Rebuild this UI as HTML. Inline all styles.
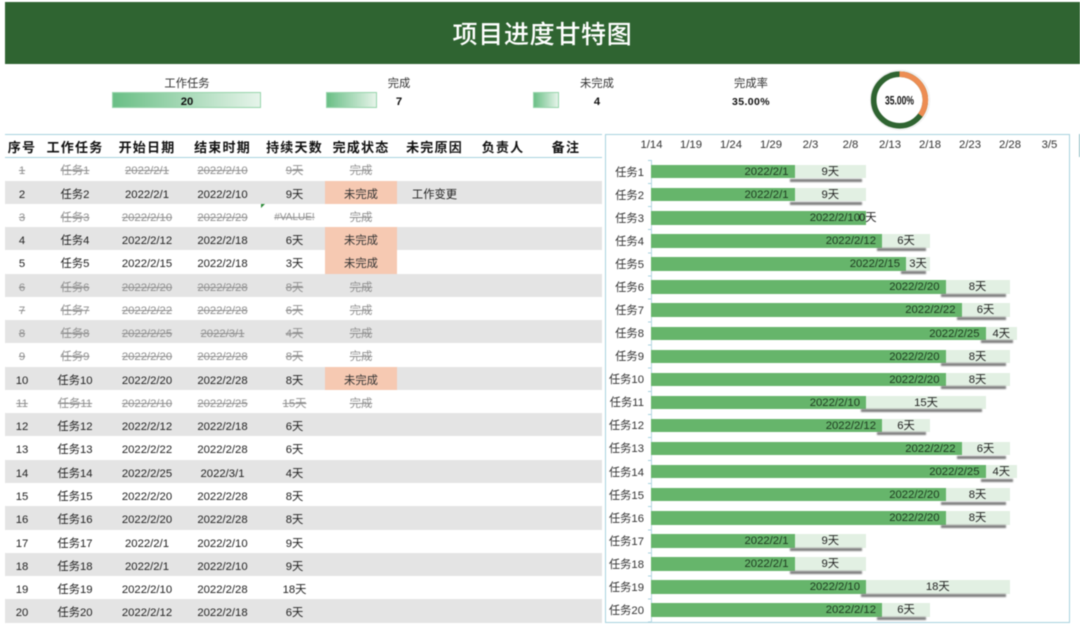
<!DOCTYPE html>
<html lang="zh">
<head>
<meta charset="utf-8">
<title>项目进度甘特图</title>
<style>
*{margin:0;padding:0;box-sizing:border-box}
html,body{width:1080px;height:626px;overflow:hidden;background:#fff}
body{position:relative;font-family:"Liberation Sans","Noto Sans CJK SC",sans-serif;font-size:11.3px;color:#222;filter:blur(.4px)}
.title{position:absolute;left:5px;top:2px;width:1075px;height:62px;background:#2f6431;color:#fff;font-size:25px;line-height:66px;text-align:center;letter-spacing:.7px;font-weight:500}
.lb,.vl{position:absolute;text-align:center;white-space:nowrap;transform:translateX(-50%)}
.lb{top:76px;line-height:16px;font-size:11.3px;color:#333}
.vl{top:94px;line-height:16px;font-weight:bold;color:#111}
.kb{position:absolute;top:92px;height:16px;background:linear-gradient(90deg,#6abf86,#e6f4ea);border:1px solid #97d4ab}
.head{position:absolute;left:5px;top:134px;width:597px;height:24px;border-top:1.5px solid #a8d2de;border-bottom:1.5px solid #a8d2de;font-weight:bold;font-size:13px;letter-spacing:1.2px;color:#111}
.head i,.r i{position:absolute;font-style:normal;text-align:center;white-space:nowrap;transform:translateX(-50%)}
.head i{top:3px;line-height:19px}
.rows{position:absolute;left:5px;top:157.3px;width:597px;height:465.4px;border-bottom:1.5px solid #a8d2de}
.r{position:relative;height:23.27px}
.r i{top:0;height:23.27px;line-height:28.5px}
.g{background:#e4e4e4}
.r i:nth-child(1){left:17px}.r i:nth-child(2){left:70px}.r i:nth-child(3){left:142px}.r i:nth-child(4){left:217.5px}.r i:nth-child(5){left:289.5px}.r i:nth-child(6){left:356px}.r i:nth-child(7){left:429.5px}
.d{color:#8f8f8f}
.d i{text-decoration:line-through}
.r i.p{width:72px;background:#f6c9b2;color:#333}
.tri{position:absolute;left:261px;top:204px;width:0;height:0;border-top:4px solid #2a8a35;border-right:4px solid transparent}
.box{position:absolute;left:605px;top:134.3px;width:465px;height:489px;border:1.5px solid #a8d2de}
.ax{position:absolute;top:138px;line-height:15px;transform:translateX(-50%);color:#333;font-size:11.3px}
.axis{position:absolute;left:651px;top:160px;width:1px;height:463px;background:#b5d8e2}
.ticks{position:absolute;left:648px;top:160px;width:3px;height:463px;background:repeating-linear-gradient(180deg,#a8d2de 0,#a8d2de 1px,transparent 1px,transparent 23.08px)}
.chart{position:absolute;left:606px;top:160.5px;width:463px}
.c{position:relative;height:23.08px}
.c u{position:absolute;right:425px;top:5px;line-height:14px;text-decoration:none;color:#333;white-space:nowrap}
.c s{position:absolute;left:45px;top:4.5px;height:13.4px;line-height:15px;background:#66b56b;text-decoration:none;text-align:right;padding-right:6px;color:#1d3a20;white-space:nowrap}
.c em{position:absolute;top:4.5px;height:13.4px;line-height:15px;background:#e2f0e3;font-style:normal;text-align:center;color:#222;white-space:nowrap}
.c em:after{content:"";position:absolute;left:-5px;right:4px;top:13.6px;height:3px;background:#7d7d7d;filter:blur(.7px)}
.c em.z{background:none;width:0}
.c em.z:after{display:none}
.edge{position:absolute;left:1079px;top:134px;width:1px;height:23px;background:#8fbcc4}
</style>
</head>
<body>
<div class="title">项目进度甘特图</div>

<div class="lb" style="left:187px">工作任务</div>
<div class="kb" style="left:112px;width:149px"></div>
<div class="vl" style="left:187px">20</div>
<div class="lb" style="left:399px">完成</div>
<div class="kb" style="left:326px;width:51px"></div>
<div class="vl" style="left:399px">7</div>
<div class="lb" style="left:597px">未完成</div>
<div class="kb" style="left:533px;width:26px"></div>
<div class="vl" style="left:597px">4</div>
<div class="lb" style="left:751px">完成率</div>
<div class="vl" style="left:751px;font-size:10.5px;letter-spacing:.4px">35.00%</div>

<svg style="position:absolute;left:865px;top:65px" width="70" height="70" viewBox="0 0 70 70">
<circle cx="35" cy="35" r="29.6" fill="none" stroke="#eeeeee" stroke-width="1.2"/>
<circle cx="34.5" cy="35" r="25.8" fill="none" stroke="#2f6431" stroke-width="5.6"/>
<path d="M34.500 9.200A25.800 25.800 0 0 1 55.400 50.200" fill="none" stroke="#ed8d53" stroke-width="5.6"/>
<text x="34.500" y="39.500" text-anchor="middle" font-family="Liberation Sans" font-size="12" font-weight="bold" fill="#111" textLength="29" lengthAdjust="spacingAndGlyphs">35.00%</text>
</svg>

<div class="head">
<i style="left:17px">序号</i><i style="left:70px">工作任务</i><i style="left:142px">开始日期</i><i style="left:217.5px">结束时期</i><i style="left:289.5px">持续天数</i><i style="left:356px">完成状态</i><i style="left:429.5px">未完原因</i><i style="left:498px">负责人</i><i style="left:561px">备注</i>
</div>

<div class="rows">
<div class="r d"><i>1</i><i>任务1</i><i>2022/2/1</i><i>2022/2/10</i><i>9天</i><i>完成</i></div>
<div class="r g"><i>2</i><i>任务2</i><i>2022/2/1</i><i>2022/2/10</i><i>9天</i><i class="p">未完成</i><i>工作变更</i></div>
<div class="r d"><i>3</i><i>任务3</i><i>2022/2/10</i><i>2022/2/29</i><i style="font-size:10px">#VALUE!</i><i>完成</i></div>
<div class="r g"><i>4</i><i>任务4</i><i>2022/2/12</i><i>2022/2/18</i><i>6天</i><i class="p">未完成</i></div>
<div class="r"><i>5</i><i>任务5</i><i>2022/2/15</i><i>2022/2/18</i><i>3天</i><i class="p">未完成</i></div>
<div class="r g d"><i>6</i><i>任务6</i><i>2022/2/20</i><i>2022/2/28</i><i>8天</i><i>完成</i></div>
<div class="r d"><i>7</i><i>任务7</i><i>2022/2/22</i><i>2022/2/28</i><i>6天</i><i>完成</i></div>
<div class="r g d"><i>8</i><i>任务8</i><i>2022/2/25</i><i>2022/3/1</i><i>4天</i><i>完成</i></div>
<div class="r d"><i>9</i><i>任务9</i><i>2022/2/20</i><i>2022/2/28</i><i>8天</i><i>完成</i></div>
<div class="r g"><i>10</i><i>任务10</i><i>2022/2/20</i><i>2022/2/28</i><i>8天</i><i class="p">未完成</i></div>
<div class="r d"><i>11</i><i>任务11</i><i>2022/2/10</i><i>2022/2/25</i><i>15天</i><i>完成</i></div>
<div class="r g"><i>12</i><i>任务12</i><i>2022/2/12</i><i>2022/2/18</i><i>6天</i></div>
<div class="r"><i>13</i><i>任务13</i><i>2022/2/22</i><i>2022/2/28</i><i>6天</i></div>
<div class="r g"><i>14</i><i>任务14</i><i>2022/2/25</i><i>2022/3/1</i><i>4天</i></div>
<div class="r"><i>15</i><i>任务15</i><i>2022/2/20</i><i>2022/2/28</i><i>8天</i></div>
<div class="r g"><i>16</i><i>任务16</i><i>2022/2/20</i><i>2022/2/28</i><i>8天</i></div>
<div class="r"><i>17</i><i>任务17</i><i>2022/2/1</i><i>2022/2/10</i><i>9天</i></div>
<div class="r g"><i>18</i><i>任务18</i><i>2022/2/1</i><i>2022/2/10</i><i>9天</i></div>
<div class="r"><i>19</i><i>任务19</i><i>2022/2/10</i><i>2022/2/28</i><i>18天</i></div>
<div class="r g"><i>20</i><i>任务20</i><i>2022/2/12</i><i>2022/2/18</i><i>6天</i></div>
</div>
<div class="tri"></div>

<div class="box"></div>
<div class="ax" style="left:651.5px">1/14</div>
<div class="ax" style="left:691px">1/19</div>
<div class="ax" style="left:731px">1/24</div>
<div class="ax" style="left:771px">1/29</div>
<div class="ax" style="left:810.5px">2/3</div>
<div class="ax" style="left:850.5px">2/8</div>
<div class="ax" style="left:890px">2/13</div>
<div class="ax" style="left:930px">2/18</div>
<div class="ax" style="left:970px">2/23</div>
<div class="ax" style="left:1010px">2/28</div>
<div class="ax" style="left:1049.5px">3/5</div>
<div class="axis"></div>
<div class="ticks"></div>

<div class="chart">
<div class="c"><u>任务1</u><s style="width:143.5px">2022/2/1</s><em style="left:188.5px;width:71.5px">9天</em></div>
<div class="c"><u>任务2</u><s style="width:143.5px">2022/2/1</s><em style="left:188.5px;width:71.5px">9天</em></div>
<div class="c"><u>任务3</u><s style="width:215px">2022/2/10</s><em class="z" style="left:260px"><span style="position:absolute;left:-7px">0天</span></em></div>
<div class="c"><u>任务4</u><s style="width:231px">2022/2/12</s><em style="left:276px;width:48px">6天</em></div>
<div class="c"><u>任务5</u><s style="width:255px">2022/2/15</s><em style="left:300px;width:24px">3天</em></div>
<div class="c"><u>任务6</u><s style="width:294.5px">2022/2/20</s><em style="left:339.5px;width:64px">8天</em></div>
<div class="c"><u>任务7</u><s style="width:310.5px">2022/2/22</s><em style="left:355.5px;width:48px">6天</em></div>
<div class="c"><u>任务8</u><s style="width:334.5px">2022/2/25</s><em style="left:379.5px;width:31.5px">4天</em></div>
<div class="c"><u>任务9</u><s style="width:294.5px">2022/2/20</s><em style="left:339.5px;width:64px">8天</em></div>
<div class="c"><u>任务10</u><s style="width:294.5px">2022/2/20</s><em style="left:339.5px;width:64px">8天</em></div>
<div class="c"><u>任务11</u><s style="width:215px">2022/2/10</s><em style="left:260px;width:120px">15天</em></div>
<div class="c"><u>任务12</u><s style="width:231px">2022/2/12</s><em style="left:276px;width:48px">6天</em></div>
<div class="c"><u>任务13</u><s style="width:310.5px">2022/2/22</s><em style="left:355.5px;width:48px">6天</em></div>
<div class="c"><u>任务14</u><s style="width:334.5px">2022/2/25</s><em style="left:379.5px;width:31.5px">4天</em></div>
<div class="c"><u>任务15</u><s style="width:294.5px">2022/2/20</s><em style="left:339.5px;width:64px">8天</em></div>
<div class="c"><u>任务16</u><s style="width:294.5px">2022/2/20</s><em style="left:339.5px;width:64px">8天</em></div>
<div class="c"><u>任务17</u><s style="width:143.5px">2022/2/1</s><em style="left:188.5px;width:71.5px">9天</em></div>
<div class="c"><u>任务18</u><s style="width:143.5px">2022/2/1</s><em style="left:188.5px;width:71.5px">9天</em></div>
<div class="c"><u>任务19</u><s style="width:215px">2022/2/10</s><em style="left:260px;width:143.5px">18天</em></div>
<div class="c"><u>任务20</u><s style="width:231px">2022/2/12</s><em style="left:276px;width:48px">6天</em></div>
</div>
<div class="edge"></div>
</body>
</html>
